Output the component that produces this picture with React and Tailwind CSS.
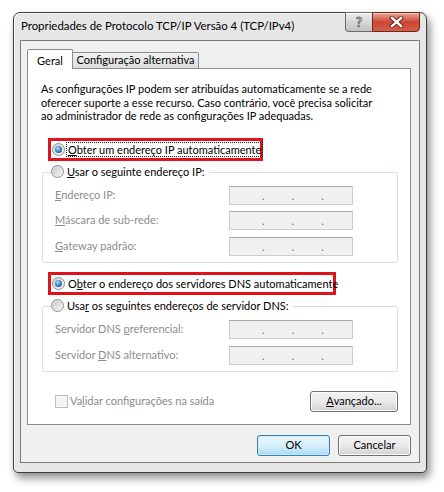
import React from "react";

const font = { fontFamily: 'Lato, "Open Sans", sans-serif' };

export default function App() {
  return (
    <div className="w-[444px] h-[492px] bg-white pt-[12px] pl-[13px] text-[11px] text-black" style={font}>
      {/* --- WINDOW --- */}
      <div className="w-[414px] h-[461px] flex flex-col px-[6px] pb-[9px] rounded-t-[7px] rounded-b-[5px] border border-[#3e3e3e] bg-[#e6e6e6] shadow-[3px_5px_9px_rgba(0,0,0,0.45),inset_1px_1px_0_#f8f8f8]">
        {/* title bar */}
        <div className="h-[27px] flex items-start shrink-0">
          <span className="pl-[1px] pt-[5px] text-[11.4px] leading-[16px] text-black whitespace-nowrap">
            Propriedades de Protocolo TCP/IP Versão 4 (TCP/IPv4)
          </span>
          <div className="ml-auto flex -mt-px">
            <div className="w-[27px] h-[20px] flex items-center justify-center rounded-bl-[4px] border border-[#6b6b6b] border-r-0 bg-linear-to-b from-[#eeeeee] via-[#d6d6d6] to-[#c3c3c3] shadow-[inset_0_1px_0_#ffffff]">
              <span className="text-[13px] leading-none font-bold text-[#f5f5f5] [-webkit-text-stroke:0.8px_#5a5a5a]">?</span>
            </div>
            <div className="w-[48px] h-[20px] flex items-center justify-center rounded-br-[4px] border border-[#6b2a20] bg-linear-to-b from-[#e7a698] via-[#cc4632] to-[#d45f48] shadow-[inset_0_1px_0_#f3c9bf]">
              <svg width="15" height="12" viewBox="0 0 15 12">
                <path d="M3 2 L12 10 M12 2 L3 10" stroke="#5a1a12" strokeWidth="4.2" strokeLinecap="square" />
                <path d="M3 2 L12 10 M12 2 L3 10" stroke="#ffffff" strokeWidth="2.4" strokeLinecap="square" />
              </svg>
            </div>
          </div>
        </div>

        {/* client area */}
        <div className="flex-1 flex flex-col border border-[#7b7b7b] bg-[#f0f0f0] pl-[6px] pr-[8px] pt-[8px]">
          {/* tabs */}
          <div className="flex items-end h-[20px] relative z-10 whitespace-nowrap">
            <div className="h-[20px] w-[46px] flex items-start justify-center pt-[3px] border border-b-0 border-[#898c95] bg-white rounded-t-[2px]">
              Geral
            </div>
            <div className="h-[17px] w-[126px] flex items-center justify-center border border-l-0 border-[#898c95] bg-linear-to-b from-[#f2f2f2] to-[#dcdcdc] rounded-tr-[2px]">
              Configuração alternativa
            </div>
          </div>

          {/* panel */}
          <div className="h-[357px] -mt-px border border-[#898c95] bg-white flex flex-col pt-[13px] whitespace-nowrap">
            <p className="pl-[13px] leading-[13.5px]">
              As configurações IP podem ser atribuídas automaticamente se a rede
              <br />
              oferecer suporte a esse recurso. Caso contrário, você precisa solicitar
              <br />
              ao administrador de rede as configurações IP adequadas.
            </p>

            {/* IP auto */}
            <div className="mt-[15px] ml-[20px] w-[215px] h-[23px] border-[3px] border-[#e0121c] flex items-center pl-[1px]">
              <Radio checked />
              <span className="ml-[1px] px-[1px] border border-dotted border-[#222] leading-[13px]">
                <u>O</u>bter um endereço IP automaticamente
              </span>
            </div>

            <Group
              mt="mt-[11px]"
              label={<><u>U</u>sar o seguinte endereço IP:</>}
              rows={[
                <><u>E</u>ndereço IP:</>,
                <><u>M</u>áscara de sub-rede:</>,
                <><u>G</u>ateway padrão:</>,
              ]}
            />

            {/* DNS auto */}
            <div className="mt-[9px] ml-[20px] w-[288px] h-[23px] border-[3px] border-[#e0121c] flex items-center pl-[1px]">
              <Radio checked />
              <span className="ml-[3px] leading-[13px]">
                O<u>b</u>ter o endereço dos servidores DNS automaticamente
              </span>
            </div>

            <Group
              mt="mt-[11px]"
              label={<>Usa<u>r</u> os seguintes endereços de servidor DNS:</>}
              rows={[
                <>Servidor DNS <u>p</u>referencial:</>,
                <>Servidor <u>D</u>NS alternativo:</>,
              ]}
              gap="gap-[7px]"
            />

            {/* validar + avançado */}
            <div className="mt-[19px] pl-[27px] pr-[12px] flex items-center justify-between">
              <div className="flex items-center gap-[2px] text-[#8a8a8a]">
                <span className="w-[13px] h-[13px] border border-[#bdbdbd] bg-[#f4f4f4]" />
                <span>Va<u>l</u>idar configurações na saída</span>
              </div>
              <Button className="w-[88px]">
                <u>A</u>vançado...
              </Button>
            </div>
          </div>

          {/* ok / cancel */}
          <div className="mt-[10px] flex justify-end gap-[8px]">
            <button className="w-[73px] h-[21px] rounded-[3px] border border-[#3c7fb1] bg-linear-to-b from-[#eaf6fd] via-[#d9f0fc] to-[#a7d9f5] shadow-[inset_0_0_0_1px_#c9ecfd] flex items-center justify-center text-black">
              OK
            </button>
            <Button className="w-[73px]">Cancelar</Button>
          </div>
        </div>
      </div>
    </div>
  );
}

/* ---- Small Components ---- */

function Radio({ checked }) {
  return (
    <span className="w-[13px] h-[13px] shrink-0 rounded-full border border-[#8c8e8f] bg-linear-to-br from-[#d4d4d4] to-[#fafafa] flex items-center justify-center">
      <span className="w-[9px] h-[9px] rounded-full bg-linear-to-br from-[#cbcbcb] to-[#f4f4f4] flex items-center justify-center">
        {checked && (
          <span className="w-[7px] h-[7px] rounded-full bg-[radial-gradient(circle_at_40%_35%,#b6e2fa_0%,#3c8cc8_45%,#0f3f74_100%)]" />
        )}
      </span>
    </span>
  );
}

function Button({ className = "", children }) {
  return (
    <button
      className={`h-[21px] rounded-[3px] border border-[#707070] bg-linear-to-b from-[#f2f2f2] via-[#ebebeb] to-[#d2d2d2] shadow-[inset_0_0_0_1px_#fcfcfc] flex items-center justify-center text-black ${className}`}
    >
      {children}
    </button>
  );
}

function IpField() {
  return (
    <div className="w-[124px] h-[19px] border border-[#cdcdcd] border-t-[#a8a8a8] bg-[#f0f0f0] flex items-center pl-[32px] gap-[27px] text-[#6d6d6d] leading-none">
      <span>.</span>
      <span>.</span>
      <span>.</span>
    </div>
  );
}

function Group({ mt, label, rows, gap = "gap-[6.5px]" }) {
  return (
    <div className={`${mt} ml-[14px] w-[356px] relative rounded-[3px] border border-[#d5dfe5] pt-[13px] pb-[6px] pl-[12px] flex flex-col ${gap}`}>
      <div className="absolute -top-[8px] left-[8px] bg-white flex items-center pr-[4px] leading-[14px]">
        <Radio />
        <span className="ml-[3px]">{label}</span>
      </div>
      {rows.map((r, i) => (
        <div key={i} className="flex items-center">
          <span className="w-[174px] text-[#8d8d8d]">{r}</span>
          <IpField />
        </div>
      ))}
    </div>
  );
}
